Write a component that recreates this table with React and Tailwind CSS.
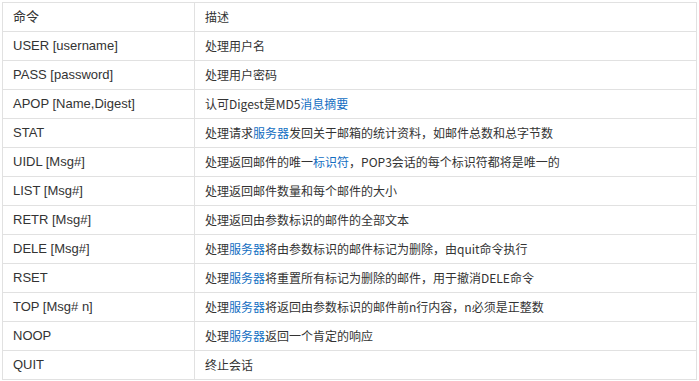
import React from 'react';

const L = ({ children }) => <span className="text-[#136ec2]">{children}</span>;

const rows = [
  ['命令', '描述'],
  ['USER [username]', '处理用户名'],
  ['PASS [password]', '处理用户密码'],
  ['APOP [Name,Digest]', <>认可Digest是MD5<L>消息摘要</L></>],
  ['STAT', <>处理请求<L>服务器</L>发回关于邮箱的统计资料，如邮件总数和总字节数</>],
  ['UIDL [Msg#]', <>处理返回邮件的唯一<L>标识符</L>，POP3会话的每个标识符都将是唯一的</>],
  ['LIST [Msg#]', '处理返回邮件数量和每个邮件的大小'],
  ['RETR [Msg#]', '处理返回由参数标识的邮件的全部文本'],
  ['DELE [Msg#]', <>处理<L>服务器</L>将由参数标识的邮件标记为删除，由quit命令执行</>],
  ['RSET', <>处理<L>服务器</L>将重置所有标记为删除的邮件，用于撤消DELE命令</>],
  ['TOP [Msg# n]', <>处理<L>服务器</L>将返回由参数标识的邮件前n行内容，n必须是正整数</>],
  ['NOOP', <>处理<L>服务器</L>返回一个肯定的响应</>],
  ['QUIT', '终止会话'],
];

export default function App() {
  return (
    <div className="w-[699px] h-[381px] bg-white pt-[2px] pl-[2px] overflow-hidden">
      <div className="w-[695px] border-t border-l border-r border-[#e1e1e1] text-[#333]">
        {rows.map(([cmd, desc], i) => (
          <div key={i} className="flex h-[29px] border-b border-[#e1e1e1]">
            <div className="w-[192px] shrink-0 border-r border-[#e1e1e1] pl-[10px] flex items-center text-[13px] font-['Liberation_Sans','Noto_Sans_CJK_SC',sans-serif]">
              {cmd}
            </div>
            <div className="flex-1 pl-[10px] flex items-center text-[12px] font-['Noto_Sans_CJK_SC',sans-serif] whitespace-nowrap">
              {desc}
            </div>
          </div>
        ))}
      </div>
    </div>
  );
}
